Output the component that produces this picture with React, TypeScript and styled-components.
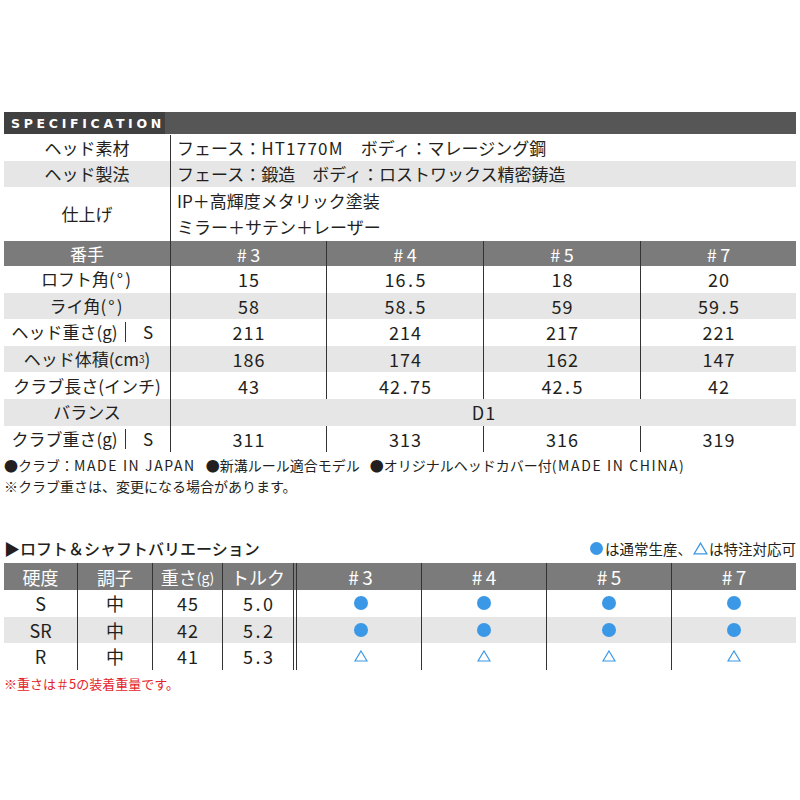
import React from 'react';
import styled, { createGlobalStyle } from 'styled-components';

const Global = createGlobalStyle`
  html, body { margin: 0; padding: 0; background: #fff; }
  body {
    font-family: "Noto Sans CJK JP", "Noto Sans", sans-serif;
    color: #231f20;
  }
`;

const BLUE = '#3b98e6';
const LINE = '#333';

const Page = styled.div`
  width: 792px;
  padding: 112px 4px 0 4px;
`;

const SpecBar = styled.div`
  display: flex;
  height: 22px;
  background: #565656;
`;

const SpecLabel = styled.div`
  width: 161px;
  box-sizing: border-box;
  background: #404040;
  color: #fff;
  font-family: "DejaVu Sans", sans-serif;
  font-weight: bold;
  font-size: 12.5px;
  letter-spacing: 3.7px;
  display: flex;
  align-items: center;
  padding-left: 7px;
`;

const SpecTable = styled.div`
  margin-top: 1px;
  display: flex;
  flex-direction: column;
`;

type Tone = 'white' | 'gray' | 'head';

const toneBg = (t: Tone) => (t === 'gray' ? '#e6e6e6' : t === 'head' ? '#7b7b7b' : '#fff');

const SpecRow = styled.div<{ $tone: Tone; $h: number }>`
  display: grid;
  grid-template-columns: 166px 156px 157px 157px 156px;
  height: ${p => p.$h}px;
  background: ${p => toneBg(p.$tone)};
  color: ${p => (p.$tone === 'head' ? '#fff' : '#231f20')};
  font-size: 17px;
`;

const Cell = styled.div<{ $span?: number; $line?: boolean; $left?: boolean }>`
  grid-column: span ${p => p.$span || 1};
  display: flex;
  align-items: center;
  justify-content: ${p => (p.$left ? 'flex-start' : 'center')};
  border-left: ${p => (p.$line ? `1px solid ${LINE}` : 'none')};
  padding-left: ${p => (p.$left ? '6px' : '0')};
  white-space: nowrap;
  line-height: 26px;
`;

const Stack = styled.div`
  display: flex;
  flex-direction: column;
`;

const LabelSplit = styled.div`
  display: flex;
  align-items: center;
  width: 100%;
`;

const LabelMain = styled.span`
  width: 121px;
  text-align: center;
  white-space: nowrap;
`;

const SubDivider = styled.span`
  width: 1px;
  height: 20px;
  background: ${LINE};
`;

const LabelSub = styled.span`
  flex: 1;
  text-align: center;
`;

const Hash = styled.span<{ $size: number }>`
  font-size: ${p => p.$size}px;
  letter-spacing: 3.5px;
  margin-right: -3.5px;
`;

const NumText = styled.span<{ $size: number }>`
  font-size: ${p => p.$size}px;
  letter-spacing: 1px;
  margin-right: -1px;
`;

const Dotted = styled.span`
  padding: 0 1.5px;
`;

const Latin = styled.span`
  letter-spacing: 1.2px;
`;

const Paren = styled.span`
  letter-spacing: 2px;
`;

const Sup = styled.sup`
  font-size: 10px;
  vertical-align: 6px;
  line-height: 0;
`;

const Notes = styled.div`
  margin-top: 3px;
  font-size: 14px;
  line-height: 21px;
`;

const LatinNote = styled.span`
  letter-spacing: 1.6px;
`;

const Gap = styled.span`
  display: inline-block;
  width: 10px;
`;

const TitleRow = styled.div`
  margin-top: 40px;
  display: flex;
  justify-content: space-between;
  align-items: center;
  height: 22px;
`;

const Title = styled.div`
  font-size: 16px;
  font-weight: 500;
`;

const Legend = styled.div`
  font-size: 14.5px;
  display: flex;
  align-items: center;
`;

const LegendDot = styled.span`
  display: inline-block;
  width: 13px;
  height: 13px;
  border-radius: 50%;
  background: ${BLUE};
  margin-right: 2px;
`;

const LegendTri = styled.span`
  display: inline-flex;
  margin: 0 1px 0 1px;
`;

const VarTable = styled.div`
  margin-top: 4px;
  display: flex;
  flex-direction: column;
`;

const VarRow = styled.div<{ $tone: Tone; $h: number }>`
  display: grid;
  grid-template-columns: 73px 75px 70px 71px 128px 125px 125px 125px;
  height: ${p => p.$h}px;
  background: ${p => toneBg(p.$tone)};
  color: ${p => (p.$tone === 'head' ? '#fff' : '#231f20')};
  font-size: 18px;
`;

const VarCell = styled.div<{ $line?: 'single' | 'double' | 'none' }>`
  display: flex;
  align-items: center;
  justify-content: center;
  white-space: nowrap;
  box-sizing: border-box;
  border-left: ${p =>
    p.$line === 'double' ? `4px double ${LINE}` : p.$line === 'single' ? `1px solid ${LINE}` : 'none'};
  padding-left: ${p => (p.$line === 'double' ? '3px' : '0')};
`;

const Small = styled.span`
  font-size: 14px;
`;

const Dot = styled.span`
  display: inline-block;
  width: 14px;
  height: 14px;
  border-radius: 50%;
  background: ${BLUE};
`;

const RedNote = styled.div`
  margin-top: 4px;
  color: #e3242b;
  font-size: 13px;
  line-height: 20px;
`;

const Tri = ({ w = 14, h = 12 }: { w?: number; h?: number }) => (
  <svg width={w} height={h} viewBox="0 0 14 12">
    <path d="M7 1 L13 11 L1 11 Z" fill="none" stroke={BLUE} strokeWidth="1.2" strokeLinejoin="miter" />
  </svg>
);

const Num = ({ v, size = 18 }: { v: string; size?: number }) => {
  const parts = v.split('.');
  return (
    <NumText $size={size}>
      {parts[0]}
      {parts.length > 1 && (
        <>
          <Dotted>.</Dotted>
          {parts[1]}
        </>
      )}
    </NumText>
  );
};

type SpecData = { label: React.ReactNode; sub?: string; vals: string[] };

const specRows: SpecData[] = [
  { label: <>ロフト角<Paren>(°)</Paren></>, vals: ['15', '16.5', '18', '20'] },
  { label: <>ライ角<Paren>(°)</Paren></>, vals: ['58', '58.5', '59', '59.5'] },
  { label: <>ヘッド重さ(g)</>, sub: 'S', vals: ['211', '214', '217', '221'] },
  { label: <>ヘッド体積(cm<Sup>3</Sup>)</>, vals: ['186', '174', '162', '147'] },
  { label: <>クラブ長さ(インチ)</>, vals: ['43', '42.75', '42.5', '42'] },
];

const varRows = [
  { flex: 'S', tone: '中', w: '45', t: '5.0', mark: 'dot', bg: 'white' as Tone },
  { flex: 'SR', tone: '中', w: '42', t: '5.2', mark: 'dot', bg: 'gray' as Tone },
  { flex: 'R', tone: '中', w: '41', t: '5.3', mark: 'tri', bg: 'white' as Tone },
];

const renderLabel = (d: SpecData) =>
  d.sub ? (
    <LabelSplit>
      <LabelMain>{d.label}</LabelMain>
      <SubDivider />
      <LabelSub>{d.sub}</LabelSub>
    </LabelSplit>
  ) : (
    d.label
  );

export default function App() {
  return (
    <>
      <Global />
      <Page>
        <SpecBar>
          <SpecLabel>SPECIFICATION</SpecLabel>
        </SpecBar>
        <SpecTable>
          <SpecRow $tone="white" $h={26}>
            <Cell>ヘッド素材</Cell>
            <Cell $span={4} $line $left>
              フェース：<Latin>HT1770M</Latin>　ボディ：マレージング鋼
            </Cell>
          </SpecRow>
          <SpecRow $tone="gray" $h={26}>
            <Cell>ヘッド製法</Cell>
            <Cell $span={4} $line $left>フェース：鍛造　ボディ：ロストワックス精密鋳造</Cell>
          </SpecRow>
          <SpecRow $tone="white" $h={54}>
            <Cell>仕上げ</Cell>
            <Cell $span={4} $line $left>
              <Stack>
                <span>IP＋高輝度メタリック塗装</span>
                <span>ミラー＋サテン＋レーザー</span>
              </Stack>
            </Cell>
          </SpecRow>
          <SpecRow $tone="head" $h={25}>
            <Cell>番手</Cell>
            {['#3', '#4', '#5', '#7'].map(h => (
              <Cell key={h} $line>
                <Hash $size={18}>{h}</Hash>
              </Cell>
            ))}
          </SpecRow>
          {specRows.map((r, i) => (
            <SpecRow key={i} $tone={i % 2 === 0 ? 'white' : 'gray'} $h={26.6}>
              <Cell>{renderLabel(r)}</Cell>
              {r.vals.map((v, j) => (
                <Cell key={j} $line>
                  <Num v={v} />
                </Cell>
              ))}
            </SpecRow>
          ))}
          <SpecRow $tone="gray" $h={26.6}>
            <Cell>バランス</Cell>
            <Cell $span={4} $line>
              <Num v="D1" />
            </Cell>
          </SpecRow>
          <SpecRow $tone="white" $h={26.6}>
            <Cell>{renderLabel({ label: <>クラブ重さ(g)</>, sub: 'S', vals: [] })}</Cell>
            {['311', '313', '316', '319'].map(v => (
              <Cell key={v} $line>
                <Num v={v} />
              </Cell>
            ))}
          </SpecRow>
        </SpecTable>
        <Notes>
          <div>
            ●クラブ：<LatinNote>MADE IN JAPAN</LatinNote>
            <Gap />●新溝ルール適合モデル<Gap />●オリジナルヘッドカバー付<LatinNote>(MADE IN CHINA)</LatinNote>
          </div>
          <div>※クラブ重さは、変更になる場合があります。</div>
        </Notes>

        <TitleRow>
          <Title>▶ロフト＆シャフトバリエーション</Title>
          <Legend>
            <LegendDot />は通常生産、
            <LegendTri>
              <Tri w={15} h={13} />
            </LegendTri>
            は特注対応可
          </Legend>
        </TitleRow>
        <VarTable>
          <VarRow $tone="head" $h={27}>
            <VarCell>硬度</VarCell>
            <VarCell $line="single">調子</VarCell>
            <VarCell $line="single">
              重さ<Small>(g)</Small>
            </VarCell>
            <VarCell $line="single">トルク</VarCell>
            {['#3', '#4', '#5', '#7'].map((h, i) => (
              <VarCell key={h} $line={i === 0 ? 'double' : 'single'}>
                <Hash $size={19}>{h}</Hash>
              </VarCell>
            ))}
          </VarRow>
          {varRows.map(r => (
            <VarRow key={r.flex} $tone={r.bg} $h={26.5}>
              <VarCell>{r.flex}</VarCell>
              <VarCell $line="single">{r.tone}</VarCell>
              <VarCell $line="single">
                <Num v={r.w} />
              </VarCell>
              <VarCell $line="single">
                <Num v={r.t} />
              </VarCell>
              {[0, 1, 2, 3].map(i => (
                <VarCell key={i} $line={i === 0 ? 'double' : 'single'}>
                  {r.mark === 'dot' ? <Dot /> : <Tri />}
                </VarCell>
              ))}
            </VarRow>
          ))}
        </VarTable>
        <RedNote>※重さは＃5の装着重量です。</RedNote>
      </Page>
    </>
  );
}
